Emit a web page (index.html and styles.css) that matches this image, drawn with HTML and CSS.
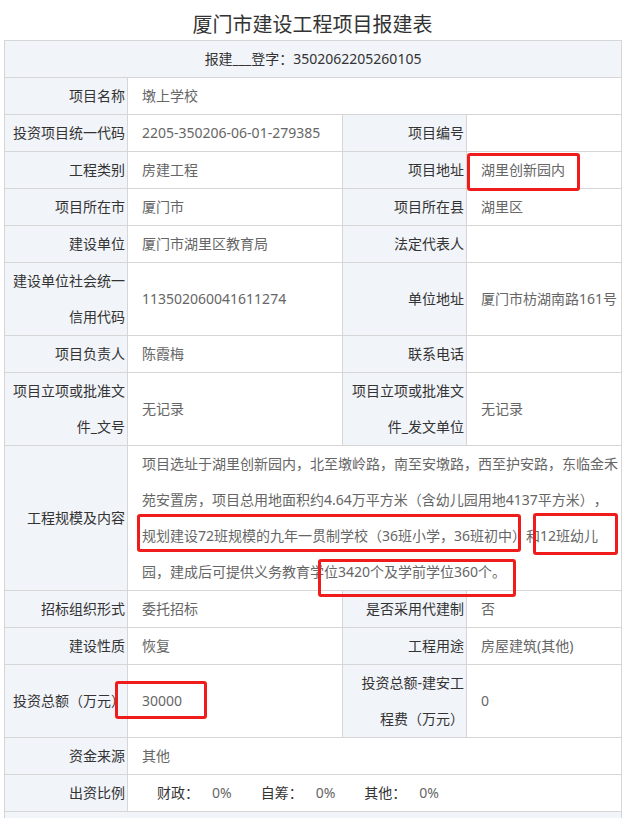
FILE: index.html
```html
<!DOCTYPE html>
<html lang="zh-CN">
<head>
<meta charset="utf-8">
<title>厦门市建设工程项目报建表</title>
<link rel="stylesheet" href="styles.css">
</head>
<body>
<div class="page">
  <h1 class="title">厦门市建设工程项目报建表</h1>
  <table class="form">
    <colgroup>
      <col class="c1"><col class="c2"><col class="c3"><col class="c4">
    </colgroup>
    <tr><td class="head" colspan="4">报建___登字：3502062205260105</td></tr>
    <tr><th>项目名称</th><td colspan="3">墩上学校</td></tr>
    <tr><th>投资项目统一代码</th><td>2205-350206-06-01-279385</td><th>项目编号</th><td></td></tr>
    <tr><th>工程类别</th><td>房建工程</td><th>项目地址</th><td>湖里创新园内</td></tr>
    <tr><th>项目所在市</th><td>厦门市</td><th>项目所在县</th><td>湖里区</td></tr>
    <tr><th>建设单位</th><td>厦门市湖里区教育局</td><th>法定代表人</th><td></td></tr>
    <tr><th>建设单位社会统一信用代码</th><td>113502060041611274</td><th>单位地址</th><td>厦门市枋湖南路161号</td></tr>
    <tr><th>项目负责人</th><td>陈霞梅</td><th>联系电话</th><td></td></tr>
    <tr><th>项目立项或批准文件_文号</th><td>无记录</td><th>项目立项或批准文件_发文单位</th><td>无记录</td></tr>
    <tr><th>工程规模及内容</th><td colspan="3">项目选址于湖里创新园内，北至墩岭路，南至安墩路，西至护安路，东临金禾苑安置房，项目总用地面积约4.64万平方米（含幼儿园用地4137平方米），规划建设72班规模的九年一贯制学校（36班小学，36班初中）和12班幼儿园，建成后可提供义务教育学位3420个及学前学位360个。</td></tr>
    <tr><th>招标组织形式</th><td>委托招标</td><th>是否采用代建制</th><td>否</td></tr>
    <tr><th>建设性质</th><td>恢复</td><th>工程用途</th><td>房屋建筑(其他)</td></tr>
    <tr><th>投资总额（万元）</th><td>30000</td><th>投资总额-建安工程费（万元）</th><td>0</td></tr>
    <tr><th>资金来源</th><td colspan="3">其他</td></tr>
    <tr><th>出资比例</th><td colspan="3" class="ratio"><span class="rk">财政：</span><span class="rv">0%</span><span class="rk">自筹：</span><span class="rv">0%</span><span class="rk">其他：</span><span class="rv">0%</span></td></tr>
    <tr><td class="head" colspan="4">&nbsp;</td></tr>
  </table>

  <div class="mark m1"></div>
  <div class="mark m2"></div>
  <div class="mark m3"></div>
  <div class="mark m4"></div>
  <div class="mark m5"></div>
</div>
</body>
</html>
```

FILE: styles.css
```css
html, body {
  margin: 0;
  padding: 0;
  background: #fff;
}
body {
  font-family: "Noto Sans", "Noto Sans CJK SC", sans-serif;
  font-size: 14px;
  color: #333;
  text-spacing-trim: space-all;
}
.page {
  position: relative;
  padding: 0 4px;
}
.title {
  margin: 0;
  padding-top: 10px;
  height: 30px;
  font-size: 20px;
  line-height: 30px;
  font-weight: normal;
  text-align: center;
  color: #333;
}
.form {
  width: 617px;
  border-collapse: collapse;
  table-layout: fixed;
  border: 1px solid #d4d4d4;
}
.c1 { width: 123px; }
.c2 { width: 215px; }
.c3 { width: 124px; }
.c4 { width: 155px; }
.form th,
.form td {
  border: 1px solid #d6d6d6;
  line-height: 36px;
  padding: 0;
  vertical-align: middle;
}
.form th {
  background: #f1f4f9;
  font-weight: normal;
  text-align: right;
  color: #333;
  padding: 0 2px 0 6px;
}
.form td {
  color: #666;
  padding: 0 0 0 14px;
  text-align: left;
  word-break: break-all;
}
.form td.head {
  background: #f1f4f9;
  text-align: center;
  color: #333;
  padding: 0;
}
.ratio .rk {
  color: #333;
  margin-left: 15px;
}
.ratio .rv {
  margin-left: 13px;
  margin-right: 14px;
}
.mark {
  position: absolute;
  border: 3px solid #f01c1c;
  border-radius: 3px;
  box-sizing: border-box;
}
.m1 { left: 467px; top: 153px; width: 113px; height: 38px; }
.m2 { left: 137px; top: 514px; width: 384px; height: 38px; }
.m3 { left: 533px; top: 513px; width: 85px; height: 42px; }
.m4 { left: 318px; top: 559px; width: 198px; height: 38px; }
.m5 { left: 115px; top: 681px; width: 92px; height: 38px; }
```
